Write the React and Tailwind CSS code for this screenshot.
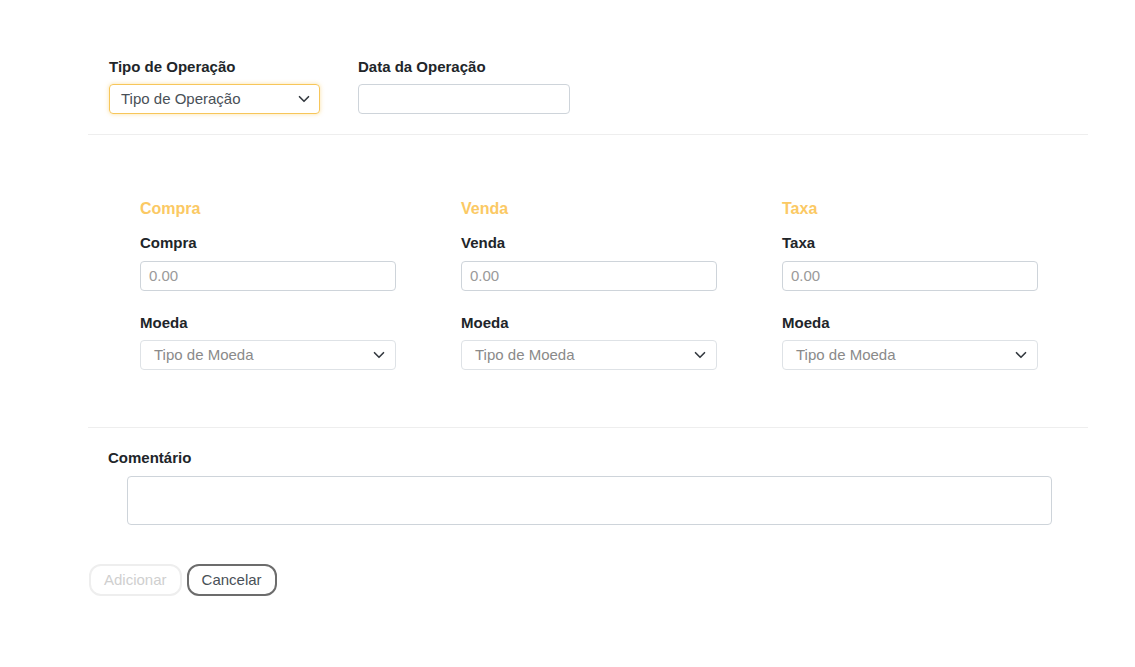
import React from 'react';

const Chevron = () => (
  <svg width="12" height="12" viewBox="0 0 16 16" className="shrink-0">
    <path d="M2 5l6 6 6-6" fill="none" stroke="#343a40" strokeWidth="2.2" strokeLinecap="round" strokeLinejoin="round" />
  </svg>
);

const MoneyColumn = ({ title }) => (
  <div className="flex flex-col">
    <h3 className="text-[16px] font-bold text-[#fbc964] leading-5">{title}</h3>
    <label className="mt-[14px] text-[15px] font-bold text-[#212529] leading-5">{title}</label>
    <div className="mt-[8px] w-[256px] h-[30px] border border-[#ced4da] rounded-[4px] px-2 flex items-center text-[15px] text-[#9a9a9a]">
      0.00
    </div>
    <label className="mt-[22px] text-[15px] font-bold text-[#212529] leading-5">Moeda</label>
    <div className="mt-[7px] w-[256px] h-[30px] border border-[#dee2e6] rounded-[4px] pl-[13px] pr-[10px] flex items-center justify-between text-[15px] text-[#8a8a8a]">
      <span>Tipo de Moeda</span>
      <Chevron />
    </div>
  </div>
);

export default function App() {
  return (
    <div className="min-h-[667px] bg-white font-['Liberation_Sans',Arial,sans-serif]">
      <div className="ml-[88px] w-[1000px] pt-[57px]">
        {/* Top row */}
        <div className="flex gap-[38px] pl-[21px] pb-[20px] border-b border-[#eeeeee]">
          <div className="flex flex-col">
            <label className="text-[15px] font-bold text-[#212529] leading-5">Tipo de Operação</label>
            <div className="mt-[7px] w-[211px] h-[30px] border border-[#f7c65a] rounded-[4px] shadow-[0_0_4px_rgba(247,198,90,0.55)] pl-[11px] pr-[9px] flex items-center justify-between text-[15px] text-[#495057]">
              <span>Tipo de Operação</span>
              <Chevron />
            </div>
          </div>
          <div className="flex flex-col">
            <label className="text-[15px] font-bold text-[#212529] leading-5">Data da Operação</label>
            <div className="mt-[7px] w-[212px] h-[30px] border border-[#ced4da] rounded-[4px]" />
          </div>
        </div>

        {/* Values */}
        <div className="pt-[64px] pb-[57px] pl-[52px] border-b border-[#eeeeee]">
          <div className="grid grid-cols-3 w-[963px]">
            <MoneyColumn title="Compra" />
            <MoneyColumn title="Venda" />
            <MoneyColumn title="Taxa" />
          </div>
        </div>

        {/* Comment */}
        <div className="pt-[18px] pl-[20px]">
          <label className="text-[15px] font-bold text-[#212529] leading-5">Comentário</label>
          <div className="mt-[6px] ml-[19px] w-[925px] h-[49px] border border-[#ced4da] rounded-[4px]" />
        </div>

        {/* Buttons */}
        <div className="mt-[39px] flex gap-[5px] pl-[1px]">
          <button className="h-[32px] px-[13px] rounded-[12px] border-2 border-[#eeeeee] text-[15px] text-[#cfcfcf] bg-white">
            Adicionar
          </button>
          <button className="h-[32px] px-[13px] rounded-[12px] border-2 border-[#6c6c6c] text-[15px] text-[#495057] bg-white">
            Cancelar
          </button>
        </div>
      </div>
    </div>
  );
}
